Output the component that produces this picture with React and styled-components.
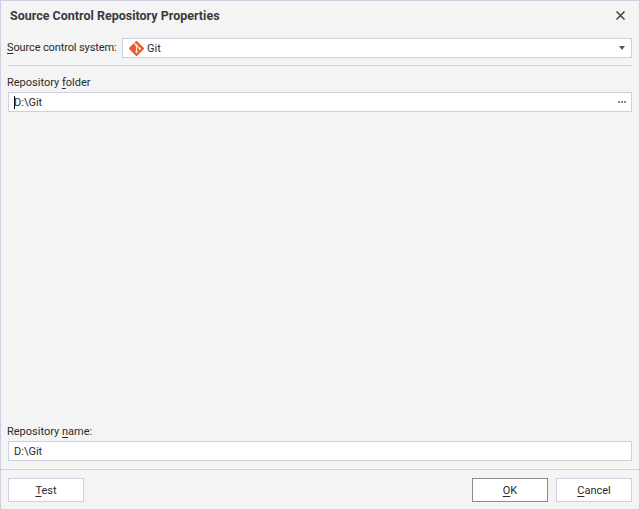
import React from "react";
import styled, { createGlobalStyle } from "styled-components";
import { SiGit } from "react-icons/si";

const GlobalStyle = createGlobalStyle`
  html, body {
    margin: 0;
    padding: 0;
    background: #f4f4f4;
  }
`;

const Dialog = styled.div`
  box-sizing: border-box;
  width: 640px;
  height: 510px;
  display: flex;
  flex-direction: column;
  background: #f4f4f4;
  border: 1px solid #cfcfdf;
  font-family: Roboto, "Liberation Sans", sans-serif;
  font-size: 11px;
  color: #2b2b2b;
`;

const TitleBar = styled.div`
  box-sizing: border-box;
  height: 28px;
  flex: none;
  display: flex;
  align-items: center;
  justify-content: space-between;
  padding: 0 14px 0 9px;
`;

const Title = styled.div`
  font-weight: 700;
  font-size: 12.5px;
  color: #3a3a3a;
`;

const Close = styled.svg`
  width: 9px;
  height: 9px;
  stroke: #444;
  stroke-width: 1.5;
`;

const Body = styled.div`
  flex: 1;
  display: flex;
  flex-direction: column;
  padding: 9px 7px 8px 7px;
`;

const SystemRow = styled.div`
  display: flex;
  align-items: center;
  gap: 5px;
  padding-bottom: 7px;
  border-bottom: 1px solid #cfcfdf;
`;

const Label = styled.label`
  display: block;
  margin-left: -1px;
  white-space: nowrap;
  line-height: 16px;
  u {
    text-underline-offset: 2px;
  }
`;

const SystemLabel = styled(Label)`
  width: 110px;
  letter-spacing: -0.12px;
`;

const Field = styled.div`
  box-sizing: border-box;
  height: 20px;
  flex: ${(p) => (p.$grow ? 1 : "none")};
  display: flex;
  align-items: center;
  gap: ${(p) => (p.$grow ? "3px" : "5px")};
  padding: 0 ${(p) => (p.$grow ? "6px" : "5px")};
  background: #fff;
  border: 1px solid #cfcfdf;
  color: #2b2b2b;
`;

const Value = styled.span`
  flex: 1;
  position: relative;
`;

const Caret = styled.span`
  position: absolute;
  left: 0;
  top: 0;
  bottom: 0;
  width: 1px;
  background: #111;
`;

const Arrow = styled.span`
  width: 0;
  height: 0;
  border-left: 3.5px solid transparent;
  border-right: 3.5px solid transparent;
  border-top: 4px solid #555;
`;

const Dots = styled.span`
  display: flex;
  gap: 1px;
  i {
    width: 2px;
    height: 2px;
    background: #888;
  }
`;

const FolderSection = styled.div`
  flex: 1;
  padding-top: 9px;
  display: flex;
  flex-direction: column;
  gap: 1px;
`;

const NameSection = styled.div`
  display: flex;
  flex-direction: column;
  gap: 1px;
`;

const Footer = styled.div`
  box-sizing: border-box;
  flex: none;
  height: 40px;
  display: flex;
  align-items: flex-start;
  justify-content: space-between;
  padding: 8px 7px 0;
  border-top: 1px solid #cfcfdf;
`;

const ButtonGroup = styled.div`
  display: flex;
  gap: 8px;
`;

const Button = styled.button`
  box-sizing: border-box;
  width: 76px;
  height: 24px;
  padding: 0;
  font: inherit;
  color: #2b2b2b;
  background: #fff;
  border: 1px solid ${(p) => (p.$primary ? "#8c8c8c" : "#cfcfdf")};
  u {
    text-underline-offset: 2px;
  }
`;

export default function App() {
  return (
    <>
      <GlobalStyle />
      <Dialog>
        <TitleBar>
          <Title>Source Control Repository Properties</Title>
          <Close viewBox="0 0 9 9">
            <path d="M0.5 0.5L8.5 8.5M8.5 0.5L0.5 8.5" />
          </Close>
        </TitleBar>
        <Body>
          <SystemRow>
            <SystemLabel>
              <u>S</u>ource control system:
            </SystemLabel>
            <Field $grow>
              <SiGit size={15} color="#f05a28" />
              <Value>Git</Value>
              <Arrow />
            </Field>
          </SystemRow>
          <FolderSection>
            <Label>
              Repository <u>f</u>older
            </Label>
            <Field>
              <Value>
                <Caret />
                D:\Git
              </Value>
              <Dots>
                <i />
                <i />
                <i />
              </Dots>
            </Field>
          </FolderSection>
          <NameSection>
            <Label>
              Repository <u>n</u>ame:
            </Label>
            <Field>
              <Value>D:\Git</Value>
            </Field>
          </NameSection>
        </Body>
        <Footer>
          <Button>
            <u>T</u>est
          </Button>
          <ButtonGroup>
            <Button $primary>
              <u>O</u>K
            </Button>
            <Button>
              <u>C</u>ancel
            </Button>
          </ButtonGroup>
        </Footer>
      </Dialog>
    </>
  );
}
